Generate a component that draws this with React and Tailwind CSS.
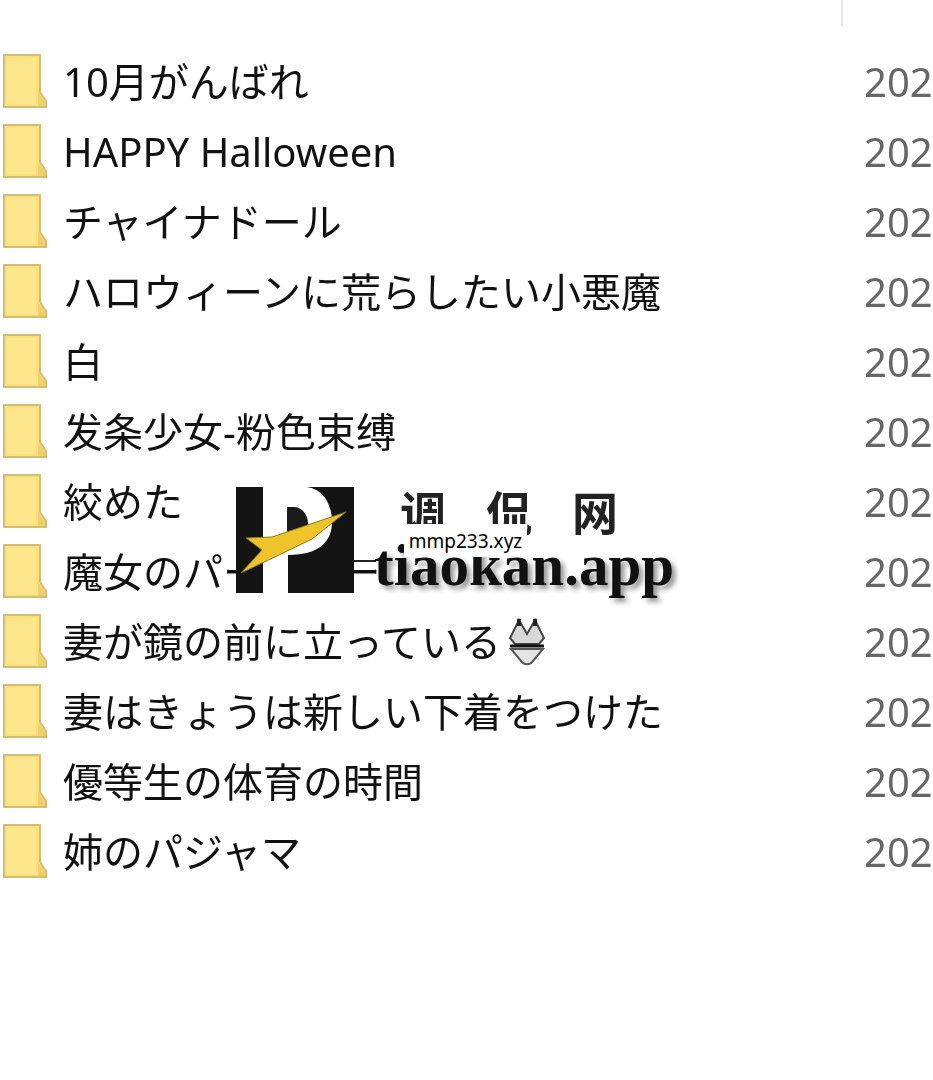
const rows = [
  "10月がんばれ",
  "HAPPY Halloween",
  "チャイナドール",
  "ハロウィーンに荒らしたい小悪魔",
  "白",
  "发条少女-粉色束缚",
  "絞めた",
  "魔女のパーティー",
  "妻が鏡の前に立っている",
  "妻はきょうは新しい下着をつけた",
  "優等生の体育の時間",
  "姉のパジャマ",
];

function Folder() {
  return (
    <svg width="46" height="54" viewBox="0 0 46 54" className="shrink-0 blur-[0.7px]">
      <path d="M2 1H38V38L44 47V53H2Z" fill="#fbe07e" stroke="#d2bd74" strokeWidth="2" />
      <path d="M36 3V38L43 48V52H36Z" fill="#f1d06c" />
      <rect x="5" y="4" width="29" height="46" fill="#fde68c" />
    </svg>
  );
}

function Bikini() {
  return (
    <svg width="40" height="48" viewBox="0 0 40 48" className="ml-[6px] blur-[0.6px]">
      <path d="M12 2L3 20L8 26H32L37 20L28 2L20 16Z" fill="#d8d8d8" stroke="#444" strokeWidth="2" />
      <path d="M12 1V8M28 1V8" stroke="#222" strokeWidth="4" />
      <path d="M3 28H37" stroke="#111" strokeWidth="3" />
      <path d="M4 31H36L25 44C23 47 17 47 15 44Z" fill="#e4e4e4" stroke="#555" strokeWidth="2" />
    </svg>
  );
}

function Logo() {
  return (
    <svg width="118" height="106" viewBox="0 0 118 106" className="shrink-0 blur-[0.4px]">
      <rect x="0" y="0" width="118" height="106" fill="#141414" />
      <path d="M27 0H68C86 0 96 16 96 35C96 54 84 68 52 68V106H27Z" fill="#fff" />
      <path d="M51 20H58C66 20 72 28 72 36C72 44 66 48 58 48H51Z" fill="#1a1a1a" />
      <path d="M110 25L36 50L10 51L26 63L5 86L45 67L76 52Z" fill="#efc32a" stroke="#8a7a20" strokeWidth="1" />
    </svg>
  );
}

export default function App() {
  return (
    <div className="relative w-[933px] h-[1080px] overflow-hidden bg-white text-[#111] font-['Noto_Sans','Noto_Sans_CJK_JP',sans-serif]">
      <div className="h-[47px]">
        <div className="ml-[841px] h-[26px] w-[2px] bg-[#e6e6e6]" />
      </div>
      <div className="flex flex-col">
        {rows.map((name, i) => (
          <div key={i} className="flex h-[70px] items-center">
            <div className="ml-[2px] w-[61px] -mt-[3px]">
              <Folder />
            </div>
            <div className="flex flex-1 items-center text-[40px] leading-[1.2] whitespace-nowrap blur-[0.6px]">
              <span>{name}</span>
              {i === 8 && <Bikini />}
            </div>
            <div className="w-[69px] text-[40px] leading-[1.2] whitespace-nowrap text-[#666] blur-[0.6px]">202</div>
          </div>
        ))}
      </div>

      <div className="absolute left-[236px] top-[487px] flex w-[450px]">
        <Logo />
        <div className="relative flex-1">
          <div className="absolute left-[46px] top-[0px] flex gap-[40px] text-[46px] leading-none font-bold text-[#222] font-['Noto_Sans_CJK_SC',sans-serif] blur-[0.7px]">
            <span>调</span>
            <span>侃</span>
            <span>网</span>
          </div>
          <div className="absolute left-0 top-[73px] h-[2px] w-[22px] bg-[#222]" />
          <div className="absolute left-[20px] top-[45px] text-[59px] leading-[66px] font-bold text-[#111] font-['Liberation_Serif',serif] [text-shadow:4px_4px_5px_#999] blur-[0.7px]">
            tiaokan.app
          </div>
        </div>
      </div>

      <div className="absolute left-[404px] top-[524px] flex h-[33px] w-[123px] items-center justify-center bg-white pt-[2px] text-[19px] leading-none text-black font-['Noto_Sans',sans-serif]">
        mmp233.xyz
      </div>
    </div>
  );
}
